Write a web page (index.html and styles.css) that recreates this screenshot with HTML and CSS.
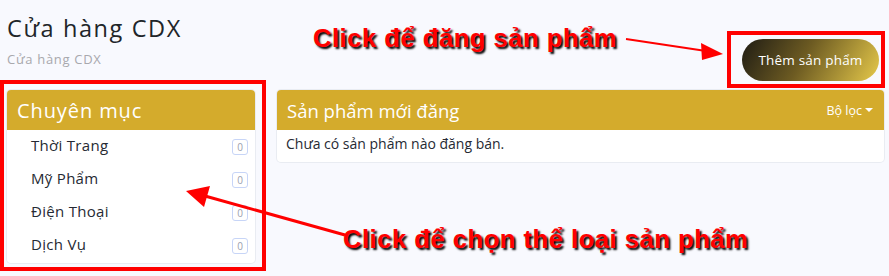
FILE: index.html
```html
<!DOCTYPE html>
<html lang="vi">
<head>
<meta charset="utf-8">
<title>Cửa hàng CDX</title>
<link rel="stylesheet" href="styles.css">
</head>
<body>
<div class="page">
  <header class="top">
    <div class="titles">
      <h1 class="title">Cửa hàng CDX</h1>
      <div class="crumb">Cửa hàng CDX</div>
    </div>
    <button class="add-btn">Thêm sản phẩm</button>
  </header>
  <main class="content">
    <aside class="card cats">
      <div class="card-head"><span class="head-title cats-title">Chuyên mục</span></div>
      <ul class="cat-list">
        <li class="cat"><span>Thời Trang</span><span class="badge">0</span></li>
        <li class="cat"><span>Mỹ Phẩm</span><span class="badge">0</span></li>
        <li class="cat"><span>Điện Thoại</span><span class="badge">0</span></li>
        <li class="cat"><span>Dịch Vụ</span><span class="badge">0</span></li>
      </ul>
    </aside>
    <section class="card products">
      <div class="card-head">
        <span class="head-title prod-title">Sản phẩm mới đăng</span>
        <span class="filter">Bộ lọc <span class="caret"></span></span>
      </div>
      <div class="card-body">Chưa có sản phẩm nào đăng bán.</div>
    </section>
  </main>
</div>
<div class="notes">
  <div class="note note-top">Click để đăng sản phẩm</div>
  <div class="note note-bottom">Click để chọn thể loại sản phẩm</div>
  <div class="frame frame-btn"></div>
  <div class="frame frame-cats"></div>
  <svg class="arrows" width="889" height="276" viewBox="0 0 889 276">
    <line x1="626" y1="39" x2="706" y2="51" stroke="#ff0000" stroke-width="2"/>
    <polygon points="723,54 701,43 702,60" fill="#ff0000"/>
    <line x1="345" y1="235" x2="205" y2="196" stroke="#ff0000" stroke-width="3"/>
    <polygon points="186,191 210,186 204,207" fill="#ff0000"/>
  </svg>
</div>
</body>
</html>
```
FILE: styles.css
```css
* { box-sizing: border-box; }
html, body { margin: 0; padding: 0; }
body {
  background: #f8f9fe;
  font-family: "Open Sans", "Noto Sans", sans-serif;
  color: #212529;
  width: 889px;
  height: 276px;
  overflow: hidden;
  position: relative;
}
.page { padding: 12px 5px 0 7px; }
.top {
  display: flex;
  justify-content: space-between;
  align-items: flex-start;
}
.title {
  margin: 0;
  font-weight: 400;
  font-size: 23.5px;
  letter-spacing: 1.6px;
  line-height: 32px;
  color: #212529;
}
.crumb {
  margin-top: 7px;
  font-size: 13px;
  letter-spacing: 0.7px;
  line-height: 16px;
  color: #a8a8ad;
}
.add-btn {
  margin-top: 27px;
  margin-right: 5px;
  width: 137px;
  height: 42px;
  border: none;
  border-radius: 21px;
  background: linear-gradient(120deg, #1f1c14 0%, #6d5b22 45%, #e6c94a 100%);
  color: #fff;
  font-family: inherit;
  font-size: 13.5px;
  letter-spacing: 0.2px;
  padding: 0;
}
.content {
  display: flex;
  gap: 22px;
  margin-top: 9px;
  align-items: flex-start;
}
.card {
  background: #fff;
  border-radius: 4px;
  box-shadow: 0 0 0 1px #e9ecf2;
  overflow: hidden;
}
.cats { width: 248px; }
.products { flex: 1; }
.card-head {
  background: #d4ab2c;
  height: 40px;
  display: flex;
  align-items: center;
  justify-content: space-between;
  padding: 0 11px 0 10px;
  color: #fff;
}
.cats-title { font-size: 20px; letter-spacing: 0.9px; }
.prod-title { font-size: 18.5px; }
.filter { font-size: 12.5px; display: flex; align-items: center; gap: 3px; }
.caret {
  width: 0; height: 0;
  border-left: 4px solid transparent;
  border-right: 4px solid transparent;
  border-top: 4px solid #fff;
}
.cat-list { list-style: none; margin: 0; padding: 0 7px 1px 24px; }
.cat {
  display: flex;
  justify-content: space-between;
  align-items: center;
  height: 33px;
  padding-bottom: 3px;
  font-size: 15px;
  letter-spacing: 0.3px;
  color: #262a33;
}
.badge {
  width: 16px;
  height: 16px;
  margin-top: 3px;
  border: 1px solid #c7d5f7;
  border-radius: 3px;
  font-size: 10px;
  letter-spacing: 0;
  color: #9aa0ad;
  display: flex;
  align-items: center;
  justify-content: center;
}
.card-body {
  padding: 4px 10px 8px 9px;
  font-size: 14px;
  line-height: 20px;
  color: #262a33;
}
.notes { position: absolute; inset: 0; pointer-events: none; }
.note {
  position: absolute;
  font-family: "Liberation Sans", Arial, sans-serif;
  font-weight: 700;
  font-size: 25.5px;
  letter-spacing: 0.55px;
  color: #ff0000;
  text-shadow: 2px 2px 2px #000;
  white-space: nowrap;
}
.note-top { left: 313px; top: 24px; }
.note-bottom { left: 343px; top: 225px; }
.frame { position: absolute; border: 4px solid #ff0000; }
.frame-btn { left: 727px; top: 31px; width: 158px; height: 57px; }
.frame-cats { left: 0; top: 80px; width: 266px; height: 191px; }
.arrows { position: absolute; left: 0; top: 0; }
```
